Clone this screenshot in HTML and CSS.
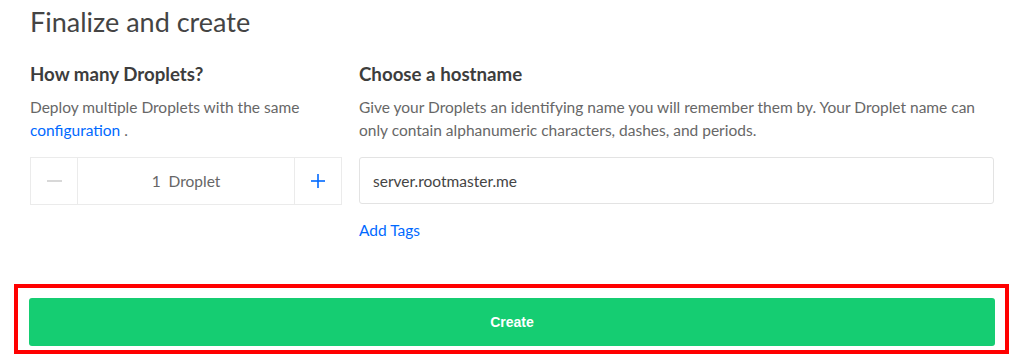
FILE: index.html
```html
<!DOCTYPE html>
<html lang="en">
<head>
    <meta charset="UTF-8">
    <meta name="viewport" content="width=device-width, initial-scale=1.0">
    <title>Finalize and create</title>
    <link rel="stylesheet" href="styles.css">
</head>
<body>
    <div class="page">
        <h1 class="page-title">Finalize and create</h1>

        <div class="columns">
            <div class="column">
                <h2 class="section-title">How many Droplets?</h2>
                <p class="section-note">Deploy multiple Droplets with the same <a href="#" class="link">configuration</a> .</p>
                <div class="stepper">
                    <button class="step-button minus" type="button"><span class="dash"></span></button>
                    <div class="step-value">1&nbsp; Droplet</div>
                    <button class="step-button plus" type="button">
                        <svg width="16" height="16" viewBox="0 0 16 16" fill="none" stroke="currentColor" stroke-width="1.6">
                            <path d="M8 1v14"></path>
                            <path d="M1 8h14"></path>
                        </svg>
                    </button>
                </div>
            </div>

            <div class="column">
                <h2 class="section-title">Choose a hostname</h2>
                <p class="section-note">Give your Droplets an identifying name you will remember them by. Your Droplet name can only contain alphanumeric characters, dashes, and periods.</p>
                <input type="text" class="hostname-input" value="server.rootmaster.me">
                <a href="#" class="link add-tags">Add Tags</a>
            </div>
        </div>
    </div>

    <div class="create-box">
        <button class="create-button" type="button">Create</button>
    </div>
</body>
</html>
```

FILE: styles.css
```css
body {
    margin: 0;
    padding: 0;
    font-family: Lato, "Open Sans", Arial, sans-serif;
    background-color: #ffffff;
    color: #444444;
}

.page {
    padding: 0 30px;
}

.page-title {
    margin: 0;
    padding-top: 6px;
    font-size: 27px;
    line-height: 32px;
    font-weight: 400;
    color: #444444;
}

.columns {
    display: grid;
    grid-template-columns: 312px 635px;
    column-gap: 17px;
    margin-top: 24px;
}

.section-title {
    margin: 0;
    font-size: 18.7px;
    line-height: 24px;
    font-weight: 700;
    color: #3d3d3d;
}

.section-note {
    margin: 10px 0 0;
    font-size: 15.5px;
    line-height: 23px;
    color: #676767;
    height: 46px;
}

.link {
    color: #0069ff;
    text-decoration: none;
}

.stepper {
    display: flex;
    margin-top: 15px;
    height: 46px;
    border: 1px solid #ebebeb;
}

.step-button {
    width: 47px;
    border: none;
    background: #ffffff;
    padding: 0;
    display: flex;
    justify-content: center;
    align-items: center;
    cursor: pointer;
}

.step-button.minus {
    border-right: 1px solid #ebebeb;
}

.step-button.plus {
    border-left: 1px solid #ebebeb;
    color: #0069ff;
}

.dash {
    width: 15px;
    height: 2px;
    background-color: #d8d8d8;
}

.step-value {
    flex: 1;
    display: flex;
    justify-content: center;
    align-items: center;
    font-size: 15.5px;
    color: #666666;
}

.hostname-input {
    display: block;
    box-sizing: border-box;
    width: 100%;
    height: 47px;
    margin-top: 15px;
    padding: 0 13px;
    border: 1px solid #e3e3e3;
    border-radius: 3px;
    font-family: inherit;
    font-size: 15.5px;
    color: #444444;
}

.add-tags {
    display: inline-block;
    margin-top: 16px;
    font-size: 15.5px;
    line-height: 20px;
}

.create-box {
    margin: 44px 15px 10px 14px;
    border: 4px solid #ff0000;
    padding: 10px 10px 4px 11px;
}

.create-button {
    display: block;
    width: 100%;
    height: 48px;
    border: none;
    border-radius: 3px;
    background-color: #15cd72;
    color: #ffffff;
    font-family: Arial, "Liberation Sans", sans-serif;
    font-size: 14px;
    font-weight: 700;
    cursor: pointer;
}
```
